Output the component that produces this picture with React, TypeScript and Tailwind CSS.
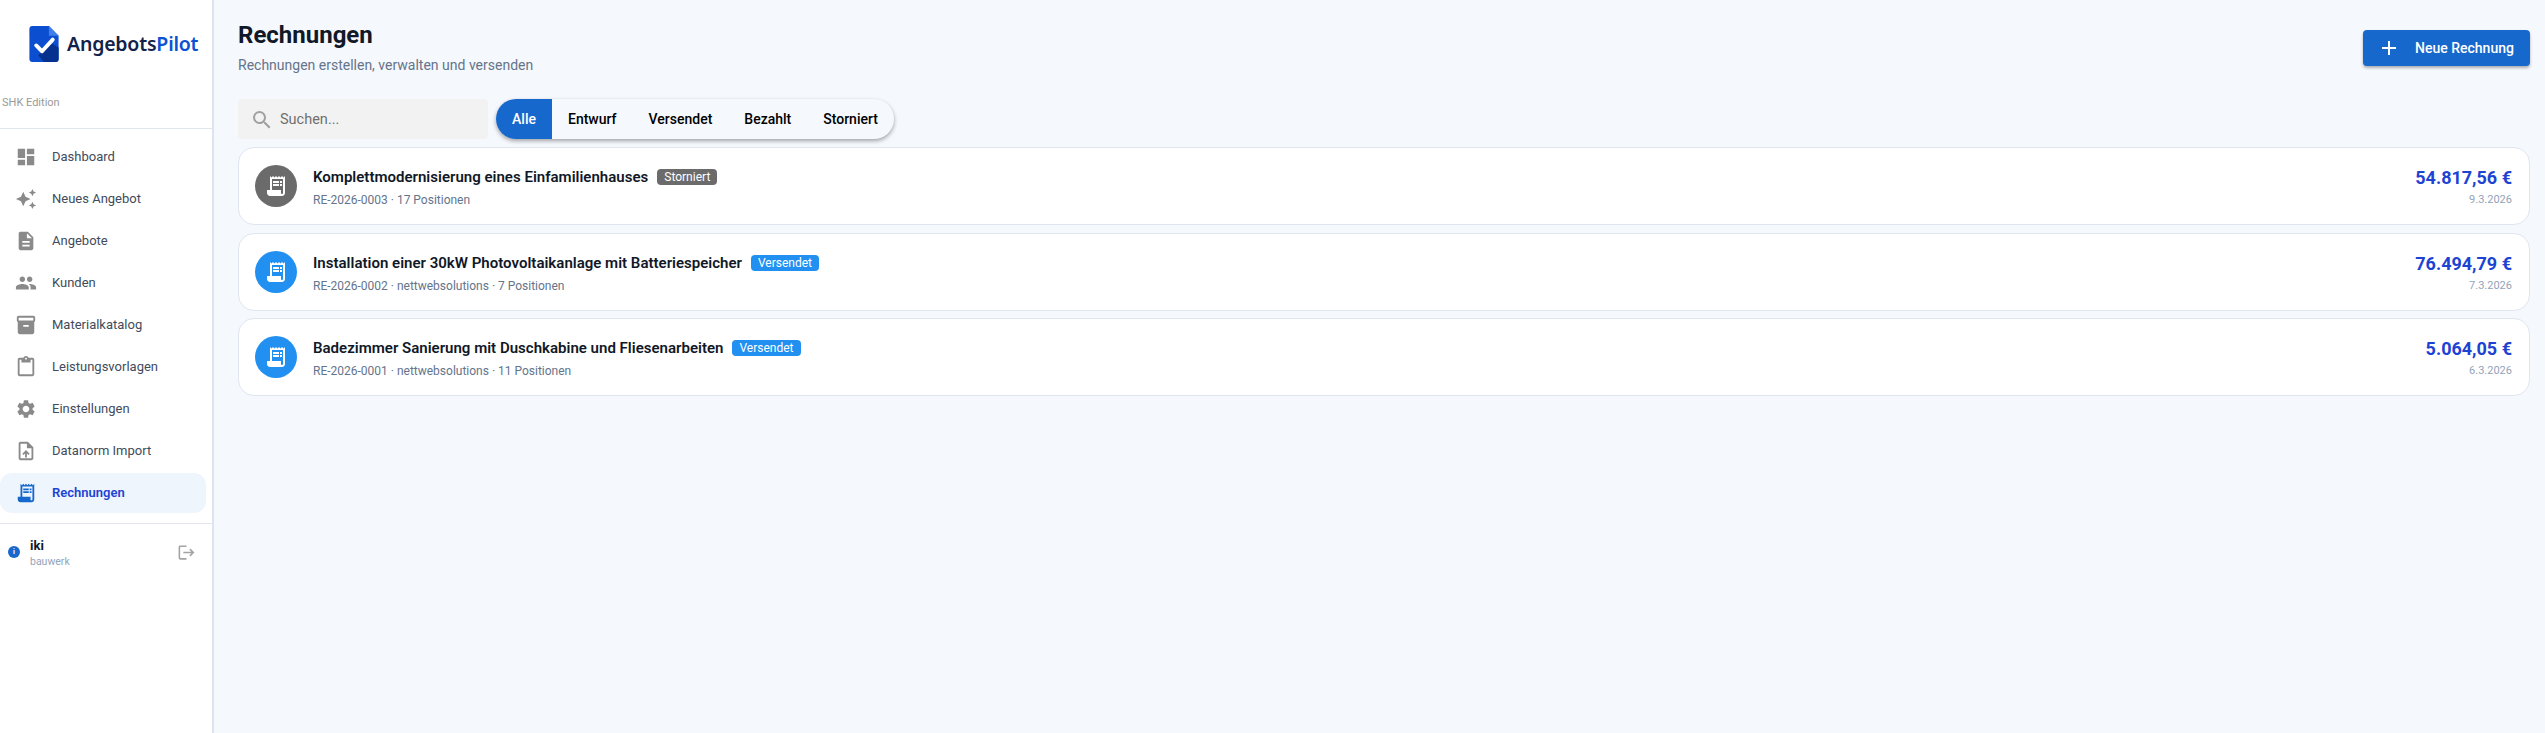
import {
  MdAdd,
  MdAutoAwesome,
  MdDashboard,
  MdDescription,
  MdInventory2,
  MdLogout,
  MdOutlineContentPaste,
  MdOutlineUploadFile,
  MdPeople,
  MdReceiptLong,
  MdSearch,
  MdSettings,
} from "react-icons/md";

const navItems = [
  { label: "Dashboard", icon: MdDashboard },
  { label: "Neues Angebot", icon: MdAutoAwesome },
  { label: "Angebote", icon: MdDescription },
  { label: "Kunden", icon: MdPeople },
  { label: "Materialkatalog", icon: MdInventory2 },
  { label: "Leistungsvorlagen", icon: MdOutlineContentPaste },
  { label: "Einstellungen", icon: MdSettings },
  { label: "Datanorm Import", icon: MdOutlineUploadFile },
  { label: "Rechnungen", icon: MdReceiptLong, active: true },
];

const invoices = [
  {
    title: "Komplettmodernisierung eines Einfamilienhauses",
    meta: "RE-2026-0003 · 17 Positionen",
    status: "Storniert",
    amount: "54.817,56 €",
    date: "9.3.2026",
    cancelled: true,
  },
  {
    title: "Installation einer 30kW Photovoltaikanlage mit Batteriespeicher",
    meta: "RE-2026-0002 · nettwebsolutions · 7 Positionen",
    status: "Versendet",
    amount: "76.494,79 €",
    date: "7.3.2026",
  },
  {
    title: "Badezimmer Sanierung mit Duschkabine und Fliesenarbeiten",
    meta: "RE-2026-0001 · nettwebsolutions · 11 Positionen",
    status: "Versendet",
    amount: "5.064,05 €",
    date: "6.3.2026",
  },
];

const filters = ["Entwurf", "Versendet", "Bezahlt", "Storniert"];

function Logo() {
  return (
    <div className="flex h-[64px] items-start pl-[29px] pt-[26px]">
      <svg width="30" height="36" viewBox="0 0 30 37" className="shrink-0">
        <path d="M3 0h17l10 10v24a3 3 0 0 1-3 3H3a3 3 0 0 1-3-3V3a3 3 0 0 1 3-3z" fill="#0b4fd0" />
        <path d="M20 0l10 10H20z" fill="#3f7de8" />
        <path d="M15 37l-6-7 14-12 7 4v12a3 3 0 0 1-3 3z" fill="#06318f" />
        <path d="M7 20l6 6L24 14" fill="none" stroke="#fff" strokeWidth="4" strokeLinecap="round" strokeLinejoin="round" />
      </svg>
      <div className="ml-[8px] mt-[6px] font-['Noto_Sans',sans-serif] text-[19.5px] leading-[24px] font-semibold tracking-[-0.2px] text-[#12224a]">
        Angebots<span className="text-[#0b52d4]">Pilot</span>
      </div>
    </div>
  );
}

function Sidebar() {
  return (
    <aside className="flex w-[214px] shrink-0 flex-col border-r-2 border-[#dbe4ef] bg-white">
      <Logo />
      <div className="flex h-[65px] items-start border-b border-[#dfe6ee] pl-[2px] pt-[31px] text-[11px] leading-[16px] text-[#9a9a9a]">
        SHK Edition
      </div>
      <nav className="flex flex-col gap-[2px] pb-[10px] pr-[6px] pt-[8px]">
        {navItems.map((item) => {
          const Icon = item.icon;
          return (
            <div
              key={item.label}
              className={`flex h-[40px] items-center rounded-[12px] pl-[15px] text-[13px] ${
                item.active ? "bg-[#eef5fd] font-semibold text-[#1d43d3]" : "text-[#414b5a]"
              }`}
            >
              <Icon size={22} className={item.active ? "text-[#1668cc]" : "text-[#8a8a8a]"} />
              <span className="ml-[15px]">{item.label}</span>
            </div>
          );
        })}
      </nav>
      <div className="flex h-[58px] items-center border-t border-[#e3e7ed] pl-[8px] pr-[16px]">
        <div className="mb-[1px] flex h-[12px] w-[12px] items-center justify-center rounded-full bg-[#1668cc] text-[7px] leading-none font-bold text-white">
          i
        </div>
        <div className="ml-[10px] flex-1">
          <div className="text-[13px] leading-[17px] font-bold text-[#111827]">iki</div>
          <div className="text-[10.5px] leading-[15px] text-[#94a3b8]">bauwerk</div>
        </div>
        <MdLogout size={19} className="mb-[1px] text-[#a3a3a3]" />
      </div>
    </aside>
  );
}

function InvoiceCard({ invoice }: { invoice: (typeof invoices)[number] }) {
  const tone = invoice.cancelled ? "bg-[#6b6b6b]" : "bg-[#2190f1]";
  return (
    <div className="flex h-[78px] items-center rounded-[16px] border border-[#dfe6f0] bg-white pl-[16px] pr-[17px]">
      <div className={`flex h-[42px] w-[42px] shrink-0 items-center justify-center rounded-full ${tone}`}>
        <MdReceiptLong size={24} className="text-white" />
      </div>
      <div className="ml-[16px] flex-1 pt-[3px]">
        <div className="flex items-center">
          <span className="text-[15.04px] leading-[22px] font-semibold text-[#111827]">{invoice.title}</span>
          <span className={`ml-[9px] rounded-[4px] px-[7px] text-[12px] leading-[16px] text-white ${tone}`}>
            {invoice.status}
          </span>
        </div>
        <div className="mt-[3px] text-[12px] leading-[18px] text-[#64748b]">{invoice.meta}</div>
      </div>
      <div className="text-right">
        <div className="text-[18px] leading-[26px] font-bold text-[#1d43d3]">{invoice.amount}</div>
        <div className="mt-[2px] text-[11px] leading-[14px] text-[#94a3b8]">{invoice.date}</div>
      </div>
    </div>
  );
}

export default function App() {
  return (
    <div className="flex h-[733px] w-full overflow-hidden bg-[#f5f8fd] font-['Roboto',sans-serif]">
      <Sidebar />
      <main className="flex-1 pl-[24px] pr-[15px] pt-[19px]">
        <div className="flex items-start justify-between">
          <div>
            <h1 className="text-[24px] leading-[32px] font-bold text-[#111827]">Rechnungen</h1>
            <p className="mt-[4px] text-[14px] leading-[20px] text-[#64748b]">
              Rechnungen erstellen, verwalten und versenden
            </p>
          </div>
          <button className="mt-[11px] flex h-[36px] w-[167px] items-center rounded-[4px] bg-[#1668cc] pl-[14px] text-[14px] font-medium text-white shadow-[0_2px_3px_rgba(0,0,0,0.3)]">
            <MdAdd size={24} />
            <span className="ml-[14px]">Neue Rechnung</span>
          </button>
        </div>
        <div className="mt-[24px] flex items-center gap-[8px]">
          <div className="flex h-[40px] w-[250px] items-center rounded-[4px] bg-[#f2f2f2] pl-[12px] pt-[1px] text-[14.5px] text-[#6f6f6f]">
            <MdSearch size={24} className="text-[#a0a0a0]" />
            <span className="ml-[6px]">Suchen...</span>
          </div>
          <div className="flex h-[40px] items-center overflow-hidden rounded-full bg-[#f5f8fd] text-[14px] font-medium text-black shadow-[0_2px_4px_rgba(0,0,0,0.35)]">
            <div className="flex h-full w-[56px] items-center justify-center bg-[#1668cc] text-white">Alle</div>
            {filters.map((filter) => (
              <div key={filter} className="flex h-full items-center px-[16px]">
                {filter}
              </div>
            ))}
          </div>
        </div>
        <div className="mt-[8px] flex flex-col gap-[7.5px]">
          {invoices.map((invoice) => (
            <InvoiceCard key={invoice.meta} invoice={invoice} />
          ))}
        </div>
      </main>
    </div>
  );
}
